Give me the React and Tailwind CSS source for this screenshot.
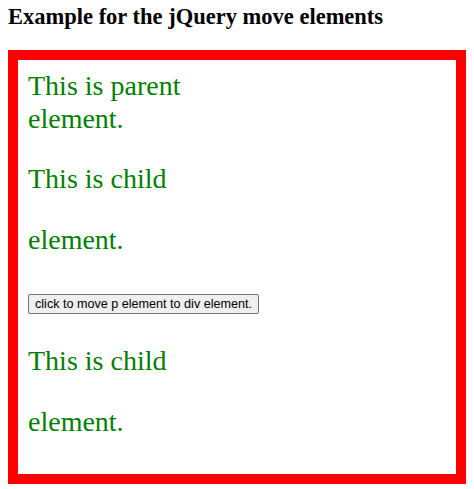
export default function App() {
  return (
    <div className="min-h-screen bg-white px-2 font-['Liberation_Serif',serif]">
      <h3 className="pt-[4px] text-[22.5px] leading-[26px] font-bold text-black">
        Example for the jQuery move elements
      </h3>

      <div className="mt-[20px] border-[10px] border-[#ff0000] px-[10px] pt-[9px] pb-[22px]">
        <p className="w-[200px] text-[28px] leading-[33px] text-[#008000]">
          This is parent element.
        </p>

        <p className="mt-[13px] w-[200px] text-[28px] leading-[61px] text-[#008000]">
          This is child element.
        </p>

        <button className="mt-[24px] h-[20px] rounded-[2px] border border-[#767676] bg-[#efefef] px-[6px] font-['Liberation_Sans',sans-serif] text-[12.6px] leading-[16px] text-black">
          click to move p element to div element.
        </button>

        <p className="mt-[15px] w-[200px] text-[28px] leading-[61px] text-[#008000]">
          This is child element.
        </p>
      </div>
    </div>
  );
}
